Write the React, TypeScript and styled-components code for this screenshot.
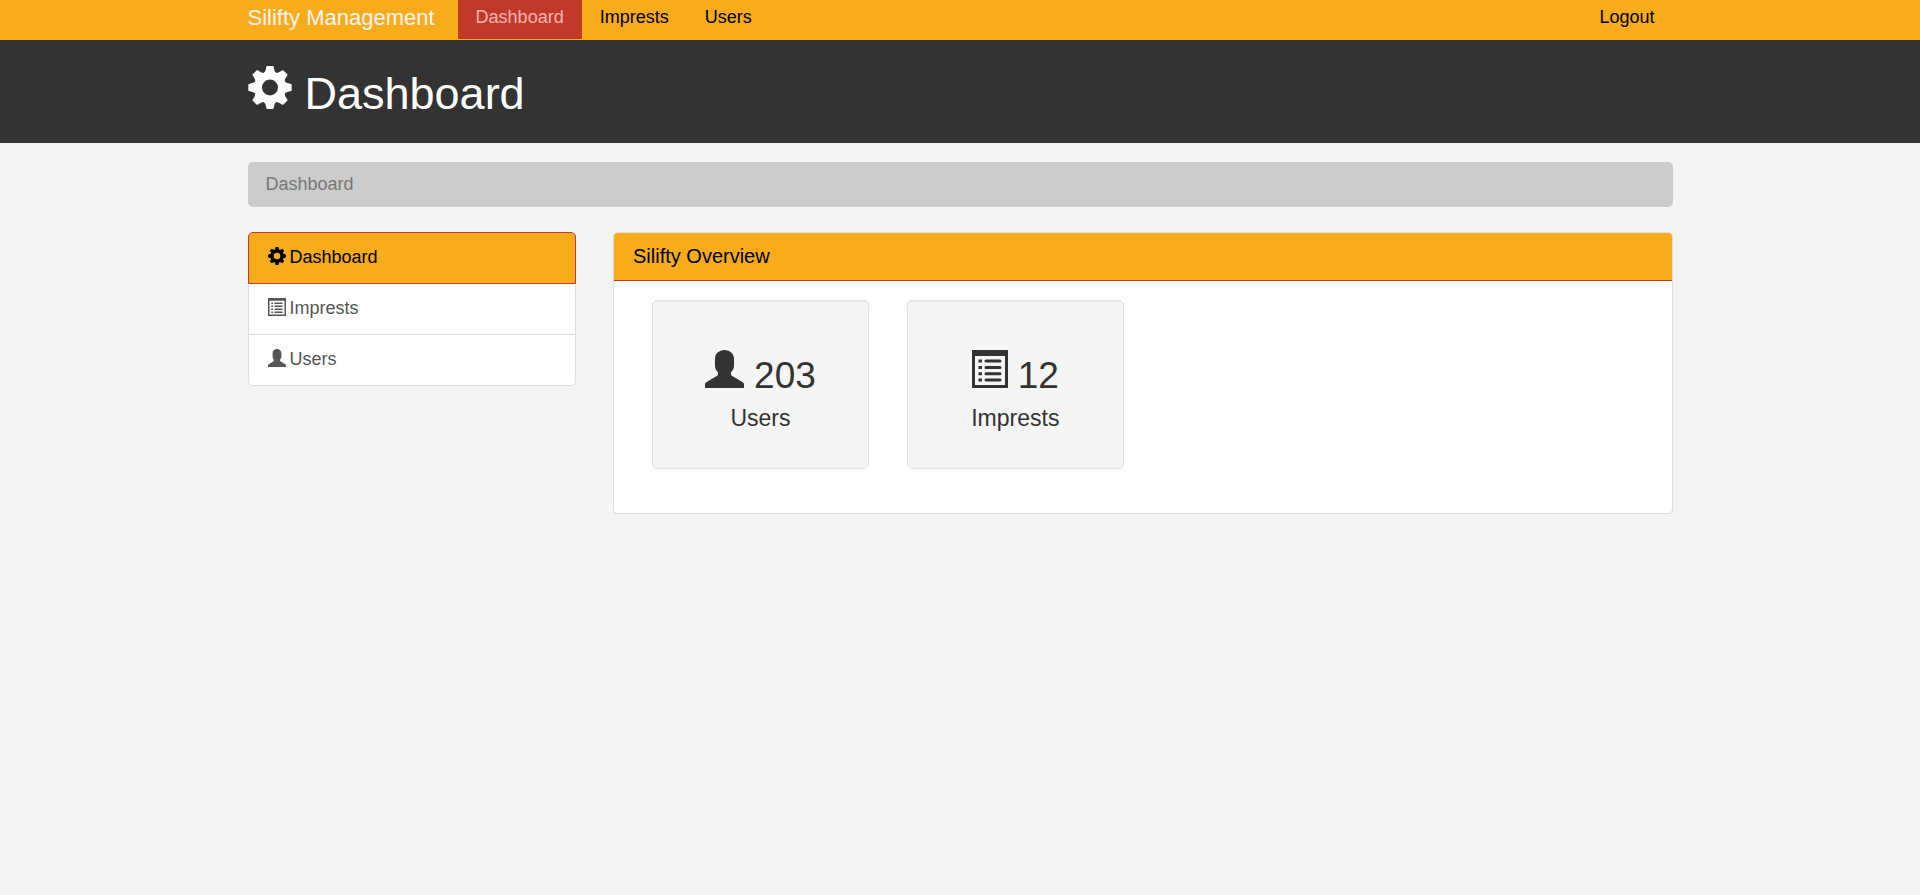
import React from 'react';
import styled, { createGlobalStyle } from 'styled-components';

const GlobalStyle = createGlobalStyle`
  *, *::before, *::after { box-sizing: border-box; }
  body {
    margin: 0;
    background: #f4f4f4;
    color: #333;
    font-family: "Liberation Sans", Arial, sans-serif;
    font-size: 18px;
    line-height: 25px;
  }
  a { text-decoration: none; color: inherit; }
  h1, h2, h3, p, ul, ol { margin: 0; padding: 0; font-weight: 400; }
  ul, ol { list-style: none; }
`;

const Container = styled.div`
  width: 100%;
  max-width: 1463px;
  margin: 0 auto;
  padding: 0 19px;
`;

const Navbar = styled.nav`
  background: #f9ac1b;
  height: 40px;
`;

const NavInner = styled(Container)`
  display: flex;
  height: 39px;
`;

const Brand = styled.a`
  padding: 5px 23px 0 0;
  font-size: 22px;
  color: #f4f4f4;
`;

const NavList = styled.ul<{ $end?: boolean }>`
  display: flex;
  margin-left: ${(p) => (p.$end ? 'auto' : '0')};
`;

const NavLink = styled.a<{ $active?: boolean }>`
  display: block;
  height: 100%;
  padding: 5px 18px 0;
  color: ${(p) => (p.$active ? '#ffb3b0' : '#000')};
  background: ${(p) => (p.$active ? '#c1392b' : 'transparent')};
`;

const Header = styled.header`
  background: #333;
  color: #fff;
  padding: 26px 0 24px;
`;

const PageTitle = styled.h1`
  display: flex;
  align-items: baseline;
  gap: 13px;
  font-size: 45px;
  line-height: 50px;
`;

const Breadcrumb = styled.ol`
  margin: 19px 0 25px;
  padding: 10px 18px;
  border-radius: 5px;
  background: #ccc;
  color: #777;
`;

const Columns = styled.div`
  display: grid;
  grid-template-columns: repeat(12, minmax(0, 1fr));
  gap: 37px;
  align-items: start;
`;

const Sidebar = styled.nav`
  grid-column: span 3;
  display: flex;
  flex-direction: column;
`;

const SideLink = styled.a<{ $active?: boolean }>`
  display: flex;
  align-items: center;
  gap: 4px;
  padding: 12px 19px 13px;
  border: 1px solid ${(p) => (p.$active ? '#c1392b' : '#ddd')};
  background: ${(p) => (p.$active ? '#f9ac1b' : '#fff')};
  color: ${(p) => (p.$active ? '#000' : '#555')};
  & + & { border-top: 0; }
  &:first-child { border-radius: 5px 5px 0 0; }
  &:last-child { border-radius: 0 0 5px 5px; }
  svg { margin-bottom: 3px; }
`;

const Panel = styled.section`
  grid-column: span 9;
  border: 1px solid #ddd;
  border-radius: 5px;
  background: #fff;
  box-shadow: 0 1px 1px rgba(0, 0, 0, 0.05);
`;

const PanelTitle = styled.h2`
  padding: 11px 19px;
  border-bottom: 1px solid #c1392b;
  border-radius: 4px 4px 0 0;
  background: #f9ac1b;
  color: #000;
  font-size: 20px;
`;

const PanelBody = styled.div`
  display: grid;
  grid-template-columns: repeat(4, minmax(0, 1fr));
  gap: 38px;
  padding: 19px 38px 44px;
`;

const StatCard = styled.div`
  padding: 49px 18px 31px;
  border: 1px solid #e3e3e3;
  border-radius: 5px;
  background: #f5f5f5;
  box-shadow: inset 0 1px 1px rgba(0, 0, 0, 0.05);
  text-align: center;
`;

const StatValue = styled.h2`
  display: flex;
  justify-content: center;
  align-items: baseline;
  gap: 10px;
  font-size: 37px;
  line-height: 44px;
`;

const StatLabel = styled.h3`
  padding: 8px 0 6px;
  font-size: 23px;
`;

const Glyph = styled.svg`
  flex: none;
  fill: currentColor;
`;

type IconProps = { width: number; height: number };

const TEETH = [0, 45, 90, 135, 180, 225, 270, 315];

const CogIcon = ({ width, height }: IconProps) => (
  <Glyph width={width} height={height} viewBox="-66 -65 132 130" preserveAspectRatio="none" aria-hidden="true">
    <circle r="36" fill="none" stroke="currentColor" strokeWidth="24" />
    {TEETH.map((angle) => (
      <path key={angle} d="M-10-65H10L14-50 19-42H-19L-14-50Z" transform={`rotate(${angle})`} />
    ))}
  </Glyph>
);

const ListIcon = ({ width, height }: IconProps) => (
  <Glyph width={width} height={height} viewBox="0 0 36 38" preserveAspectRatio="none" aria-hidden="true">
    <path fillRule="evenodd" d="M0 0H36V38H0ZM3 6V35H33V6Z" />
    <path d="M6.500 9.500h3.500v3h-3.500zM6.500 16h3.500v3h-3.500zM6.500 22.300h3.500v3h-3.500zM6.500 28.600h3.500v3h-3.500z" />
    <path
      d="M14 11H28M14 17.400H28M14 23.700H28M14 30H28"
      fill="none"
      stroke="currentColor"
      strokeWidth="3"
      strokeLinecap="round"
    />
  </Glyph>
);

const UserIcon = ({ width, height }: IconProps) => (
  <Glyph width={width} height={height} viewBox="0 0 36 38" preserveAspectRatio="none" aria-hidden="true">
    <path d="M18 0C23 0 26.800 3.500 26.800 9V15C26.800 18 26.300 20 24.500 21.500C23.700 22.500 23.700 25 24.800 25.800L34.500 32C35.500 32.700 36 33.400 36 34.500V38H0V34.500C0 33.400 .5 32.700 1.500 32L11.200 25.800C12.300 25 12.300 22.500 11.500 21.500C9.700 20 9.200 18 9.200 15V9C9.200 3.500 13 0 18 0Z" />
  </Glyph>
);

export default function App() {
  return (
    <>
      <GlobalStyle />
      <Navbar>
        <NavInner>
          <Brand href="#">Silifty Management</Brand>
          <NavList>
            <li><NavLink href="#" $active>Dashboard</NavLink></li>
            <li><NavLink href="#">Imprests</NavLink></li>
            <li><NavLink href="#">Users</NavLink></li>
          </NavList>
          <NavList $end>
            <li><NavLink href="#">Logout</NavLink></li>
          </NavList>
        </NavInner>
      </Navbar>
      <Header>
        <Container>
          <PageTitle><CogIcon width={44} height={43} />Dashboard</PageTitle>
        </Container>
      </Header>
      <Container as="main">
        <Breadcrumb><li>Dashboard</li></Breadcrumb>
        <Columns>
          <Sidebar>
            <SideLink href="#" $active><CogIcon width={18} height={18} />Dashboard</SideLink>
            <SideLink href="#"><ListIcon width={18} height={18} />Imprests</SideLink>
            <SideLink href="#"><UserIcon width={18} height={18} />Users</SideLink>
          </Sidebar>
          <Panel>
            <PanelTitle>Silifty Overview</PanelTitle>
            <PanelBody>
              <StatCard>
                <StatValue><UserIcon width={39} height={38} />203</StatValue>
                <StatLabel>Users</StatLabel>
              </StatCard>
              <StatCard>
                <StatValue><ListIcon width={36} height={38} />12</StatValue>
                <StatLabel>Imprests</StatLabel>
              </StatCard>
            </PanelBody>
          </Panel>
        </Columns>
      </Container>
    </>
  );
}
